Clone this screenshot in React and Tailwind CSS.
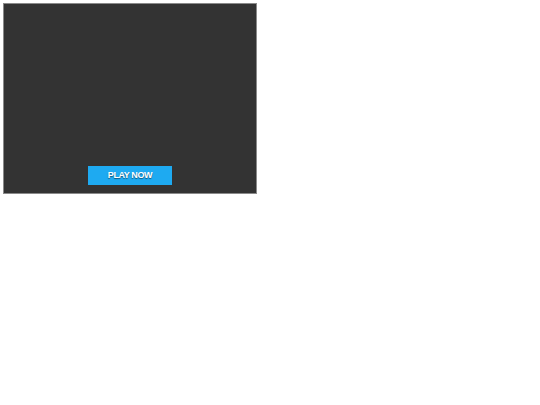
export default function App() {
  return (
    <div className="p-[3px] bg-white w-[540px] h-[405px]" style={{ fontFamily: '"Liberation Sans", Arial, sans-serif' }}>
      <div className="w-[254px] h-[191px] bg-[#333333] border border-[#8a8a8a] flex flex-col items-center justify-end pb-[8px]">
        <button className="w-[84px] h-[19px] bg-[#1eaaf1] text-white font-bold text-[9px] tracking-[-0.4px] leading-none flex items-center justify-center [text-shadow:0_1px_1px_rgba(0,0,0,0.5)]">
          PLAY NOW
        </button>
      </div>
    </div>
  );
}
